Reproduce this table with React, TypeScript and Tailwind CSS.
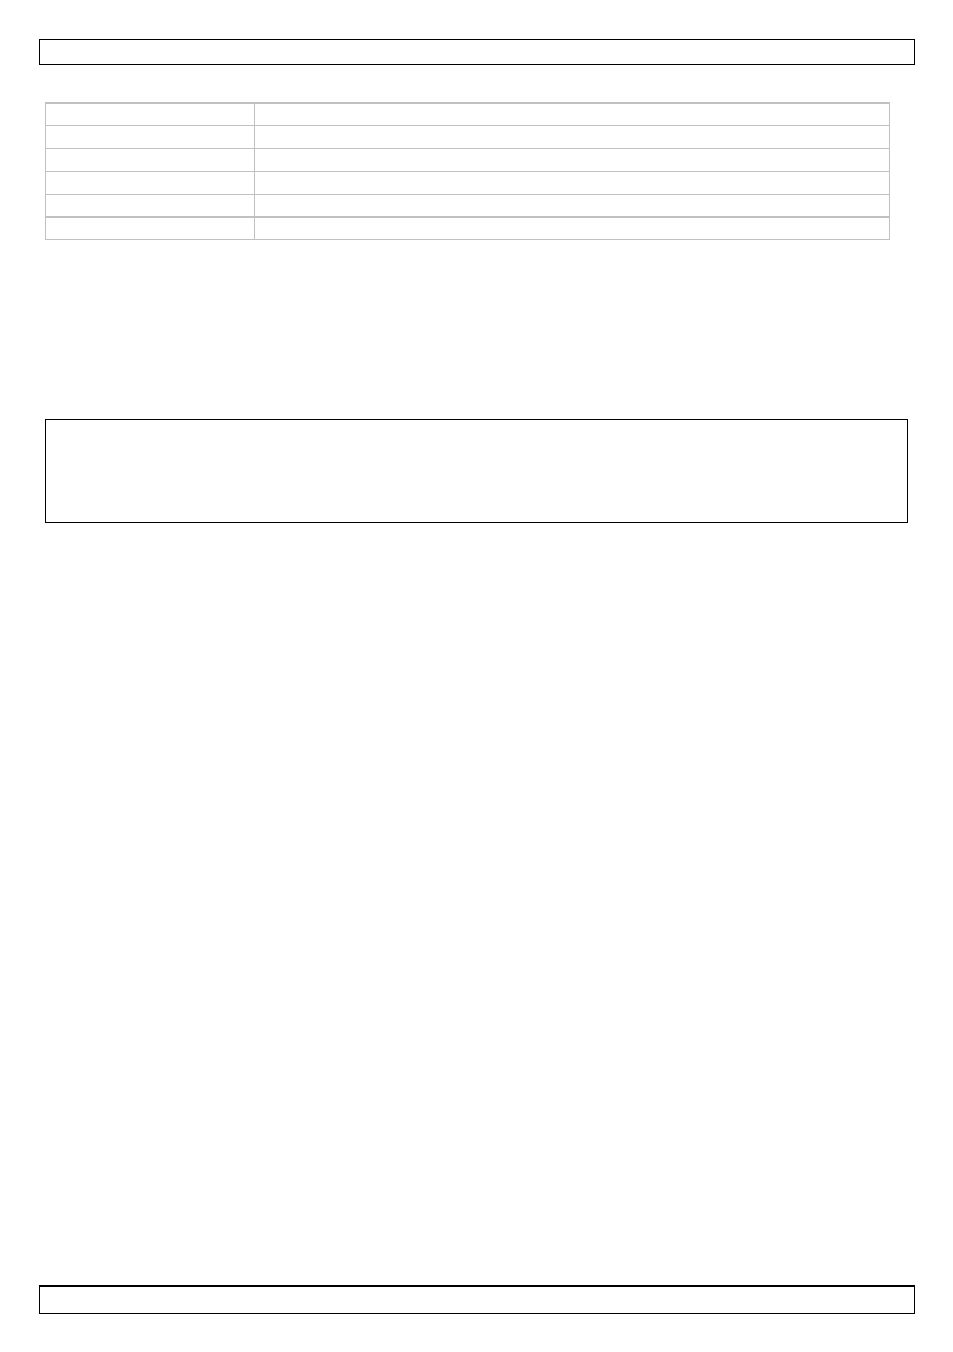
const rowClasses = [
  "flex h-[22px] border-b border-[#c0c0c0]",
  "flex h-[23px] border-b border-[#c0c0c0]",
  "flex h-[23px] border-b border-[#c0c0c0]",
  "flex h-[23px] border-b border-[#c0c0c0]",
  "flex h-[23px] border-b-2 border-[#c0c0c0]",
  "flex h-[21px]",
]

function SpecTable() {
  return (
    <div className="ml-[6px] mt-[37px] w-[845px] border-x border-t-2 border-b border-[#c0c0c0]">
      {rowClasses.map((cls, i) => (
        <div key={i} className={cls}>
          <div className="w-[209px] shrink-0 border-r border-[#c0c0c0]" />
          <div className="flex-1" />
        </div>
      ))}
    </div>
  )
}

export default function App() {
  return (
    <div className="w-[953px] h-[1352px] bg-white px-[39px] pt-[39px] font-['Liberation_Sans',sans-serif] text-black">
      <div className="h-[26px] w-[876px] border border-black" />
      <SpecTable />
      <div className="ml-[6px] mt-[179px] h-[104px] w-[863px] border border-black" />
      <div className="mt-[762px] h-[29px] w-[876px] border border-t-2 border-black" />
    </div>
  )
}
